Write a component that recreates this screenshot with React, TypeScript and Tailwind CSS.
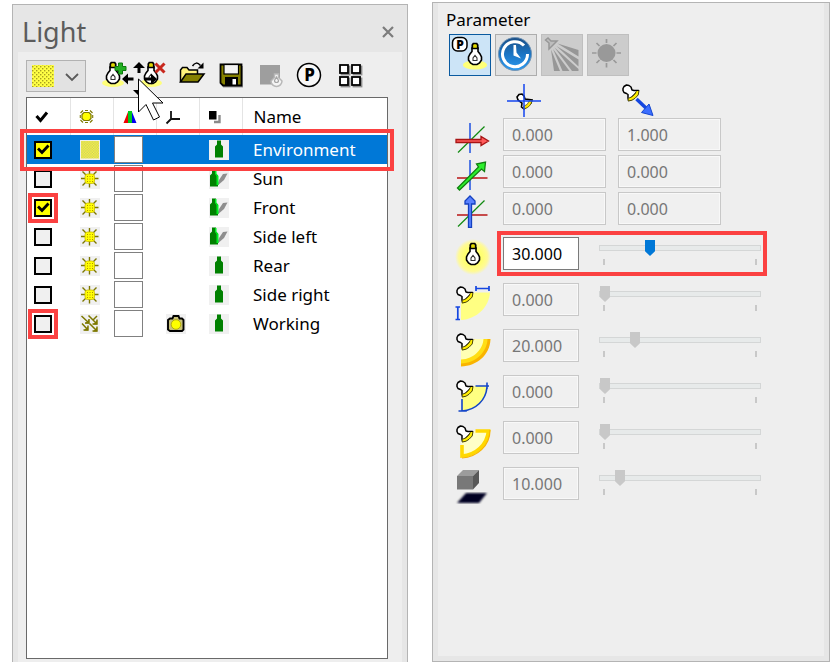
import type { ReactNode } from "react";

const FONT = "font-['Noto_Sans','Open_Sans',sans-serif]";

/* ---------- shared drawings ---------- */

function Bulb({ x, y, tone = "#000" }: { x: number; y: number; tone?: string }) {
  return (
    <g transform={`translate(${x} ${y})`}>
      <path d="M-3 -8 V-4.500 L-5 -2 L-6.500 1 V4 L-4.500 7 L-2 8.500 H2 L4.500 7 L6.500 4 V1 L5 -2 L3 -4.500 V-8 Z" fill="#fff" stroke={tone} strokeWidth="1.600" />
      <path d="M-2.700 -11 L-1.700 -12.500 H1.700 L2.700 -11 V-7.500 H-2.700 Z" fill="#e0d800" stroke={tone} strokeWidth="1.700" />
      <path d="M-2 4.500 V2 L0 -0.500 L2 2 V4.500 M-2.500 4.500 H2.500" fill="none" stroke="#333" strokeWidth="1.100" />
    </g>
  );
}

function Lamp({ x, y }: { x: number; y: number }) {
  return (
    <g transform={`translate(${x} ${y})`}>
      <path d="M1 4.500 L2 2.500 L4.500 1 L7 1.500 L9 3 L10 6 L12 6.500 H16.500 L6.500 16.500 L6 14 V10.500 L4.500 9.500 L2 8.500 L1 6.500 Z" fill="#fff" stroke="#000" strokeWidth="1.500" strokeLinejoin="round" />
      <path d="M17 7 L16 11 L13 14 L10 16 L6.500 17 V14.500 L10 12.800 L13 10 L14.500 7 Z" fill="#ffee00" />
      <path d="M17 6.500 L16.200 11 L13 14.300 L10 16.200 L6.500 17 M14.300 7.500 L12.500 10.500 L9.500 13 L7 14" fill="none" stroke="#4a4400" strokeWidth="1" />
    </g>
  );
}

function DotPattern({ id }: { id: string }) {
  return (
    <pattern id={id} width="4" height="4" patternUnits="userSpaceOnUse">
      <rect width="4" height="4" fill="#ffff45" />
      <rect width="1.400" height="1.400" fill="#a8a020" />
      <rect x="2" y="2" width="1.400" height="1.400" fill="#a8a020" />
    </pattern>
  );
}

/* ---------- toolbar icons ---------- */

function ToolSvg({ children }: { children: ReactNode }) {
  return (
    <svg viewBox="0 0 28 28" className="size-7 overflow-visible" aria-hidden="true">
      {children}
    </svg>
  );
}

const addIcon = (
  <ToolSvg>
    <ellipse cx="13" cy="21" rx="11" ry="4" fill="#ffff7a" />
    <Bulb x={13} y={13} />
    <path d="M18.500 1 h4 v3.500 h3.500 v4 h-3.500 v3.500 h-4 v-3.500 h-3.500 v-4 h3.500 Z" fill="#22b022" stroke="#0c7a0c" strokeWidth="1" />
  </ToolSvg>
);

const removeIcon = (
  <ToolSvg>
    <ellipse cx="12" cy="21" rx="11" ry="4" fill="#ffff7a" />
    <Bulb x={12} y={13} />
    <path d="M16.500 1.500 L25.500 10.500 M25.500 1.500 L16.500 10.500" stroke="#c8281e" strokeWidth="3" />
  </ToolSvg>
);

const openIcon = (
  <ToolSvg>
    <path d="M2.500 20 V8 L4.500 5.500 H9 L11 8 H19.500 V12" fill="#fff27a" stroke="#000" strokeWidth="1.500" />
    <path d="M2.500 20 L8 12 H26 L20 20 Z" fill="#858000" stroke="#000" strokeWidth="1.500" />
    <path d="M14.500 4 Q18 -1.500 22.500 3.500" fill="none" stroke="#000" strokeWidth="1.500" />
    <path d="M25.500 0.500 V6.500 H19.500 Z" />
  </ToolSvg>
);

const saveIcon = (
  <ToolSvg>
    <path d="M5 4 H26 V25.500 H6 Z" fill="#9a9a9a" />
    <path d="M3.500 2.500 H24.500 V23.500 H6 L3.500 21 Z" fill="#858000" stroke="#000" strokeWidth="1.800" />
    <rect x="7" y="2.500" width="14.500" height="9.500" fill="#f4f4f4" stroke="#000" strokeWidth="1.200" />
    <rect x="8" y="15" width="13" height="8.500" />
    <rect x="15.500" y="17" width="3.500" height="5.500" fill="#fff" />
  </ToolSvg>
);

const bitmapIcon = (
  <ToolSvg>
    <rect x="4" y="3" width="20" height="19.500" fill="#9e9e9e" />
    <path d="M18.500 12 h4 v3.500 L26 19 a5 5 0 0 1 -11 0 L18.500 15.500 Z" fill="#f4f4f4" stroke="#b8b8b8" strokeWidth="1.500" />
    <path d="M20.500 15 l2 3.500 a2 2 0 1 1 -4 0 Z" fill="#f4f4f4" stroke="#a6a6a6" strokeWidth="1.200" />
  </ToolSvg>
);

const parameterIcon = (
  <ToolSvg>
    <circle cx="14" cy="13" r="11.500" fill="#f8f8f8" stroke="#000" strokeWidth="1.500" />
    <text x="14.500" y="19" textAnchor="middle" fontSize="17" fontWeight="800" className="font-['Noto_Sans',sans-serif]">P</text>
  </ToolSvg>
);

const tilesIcon = (
  <ToolSvg>
    {[
      [6, 3],
      [18, 3],
      [6, 15],
      [18, 15],
    ].map(([x, y]) => (
      <g key={`${x}-${y}`}>
        <rect x={x + 1.5} y={y + 1.5} width="8" height="8" fill="none" stroke="#8c8c8c" strokeWidth="1.800" />
        <rect x={x} y={y} width="8" height="8" fill="#fff" stroke="#000" strokeWidth="1.800" />
      </g>
    ))}
  </ToolSvg>
);

const tools = [
  { name: "Add light", icon: addIcon },
  { name: "Delete light", icon: removeIcon },
  { name: "Open", icon: openIcon },
  { name: "Save", icon: saveIcon },
  { name: "Save bitmap", icon: bitmapIcon },
  { name: "Parameter", icon: parameterIcon },
  { name: "Arrange", icon: tilesIcon },
];

/* ---------- light list ---------- */

function CellSvg({ children }: { children: ReactNode }) {
  return (
    <svg viewBox="0 0 20 20" className="block size-5 bg-[#f0f0f0]" aria-hidden="true">
      {children}
    </svg>
  );
}

function AreaIcon() {
  return (
    <CellSvg>
      <defs>
        <pattern id="area" width="2.600" height="2.600" patternUnits="userSpaceOnUse">
          <rect width="2.600" height="2.600" fill="#ffff3c" />
          <rect width="1.300" height="1.300" fill="#c8c468" />
          <rect x="1.300" y="1.300" width="1.300" height="1.300" fill="#c8c468" />
        </pattern>
      </defs>
      <rect x="1" y="1" width="18" height="17.500" fill="url(#area)" />
    </CellSvg>
  );
}

function SunIcon() {
  return (
    <CellSvg>
      <path d="M9.500 1 V5 M9.500 14 V18.500 M1 9.500 H5 M14 9.500 H18.500 M2.500 2.500 L6 6 M13 13 L16.500 16.500 M16.500 2.500 L13 6 M6 13 L2.500 16.500" stroke="#7d7800" strokeWidth="1.400" />
      <rect x="5" y="5" width="9.500" height="9.500" rx="2.500" fill="#ffff00" stroke="#c9b800" strokeWidth="0.800" />
      <path d="M7.500 7 V13 M10 7 V13 M12.500 7 V13" stroke="#b09000" strokeWidth="1" strokeDasharray="1 1.500" />
    </CellSvg>
  );
}

function ParallelIcon() {
  return (
    <CellSvg>
      <g fill="none" stroke="#7d7800" strokeWidth="1.500">
        <path d="M1.500 2 L9 9 M5 9 H9 V5" />
        <path d="M8.500 1.500 L17 10 M13 6 L17 2 M12.500 10 H17 V5.500" />
        <path d="M2 9.500 L8 16 M3.500 16 H8 V11.500" />
        <path d="M9.500 9.500 L17 17 M12.500 17 H17 V12.500" />
      </g>
      <path d="M9 9.500 H5 L9 5.500 Z M17 10.500 H13 L17 6.500 Z M8 16.500 H4 L8 12.500 Z M17 17.500 H13 L17 13.500 Z" fill="#7d7800" />
    </CellSvg>
  );
}

function BottleIcon({ shadow }: { shadow: boolean }) {
  return (
    <CellSvg>
      {shadow ? (
        <>
          <path d="M8 17 L10 11 L14 5 L18.500 4.500 L15 11 Z" fill="#8e8e8e" />
          <path d="M3 0.500 H7 V4.500 L9 6.500 V17.500 H1 V6.500 L3 4.500 Z" fill="#008000" />
          <path d="M6 1 H7.500 V5 L9.500 7 V16 H7.500 V7 L6 5 Z" fill="#00f020" />
        </>
      ) : (
        <path d="M8 0.500 H12 V4.500 L14 6.500 V17.500 H6 V6.500 L8 4.500 Z" fill="#008000" />
      )}
    </CellSvg>
  );
}

function CameraIcon() {
  return (
    <CellSvg>
      <path d="M4 4.500 H6.500 L7.500 2 H12.500 L13.500 4.500 H16 L17.500 6 V15.500 L16 17 H4 L2 15.500 V6 Z" fill="#c9c27a" stroke="#000" strokeWidth="1.900" />
      <circle cx="10" cy="10.500" r="4.800" fill="#ffff00" stroke="#a8a000" strokeWidth="0.800" />
    </CellSvg>
  );
}

const kindIcons = { area: AreaIcon, sun: SunIcon, parallel: ParallelIcon };

type Light = {
  name: string;
  on: boolean;
  kind: keyof typeof kindIcons;
  shadow: boolean;
  camera?: boolean;
  marked?: boolean;
  selected?: boolean;
};

const lights: Light[] = [
  { name: "Environment", on: true, kind: "area", shadow: false, selected: true },
  { name: "Sun", on: false, kind: "sun", shadow: true },
  { name: "Front", on: true, kind: "sun", shadow: true, marked: true },
  { name: "Side left", on: false, kind: "sun", shadow: true },
  { name: "Rear", on: false, kind: "sun", shadow: false },
  { name: "Side right", on: false, kind: "sun", shadow: false },
  { name: "Working", on: false, kind: "parallel", shadow: false, camera: true, marked: true },
];

function HeadSvg({ label, children }: { label: string; children: ReactNode }) {
  return (
    <svg viewBox="0 0 16 16" className="block size-4" role="img" aria-label={label}>
      {children}
    </svg>
  );
}

const heads = [
  <HeadSvg label="On">
    <path d="M1.500 7 L5.500 11.500 L12 3.500" fill="none" stroke="#000" strokeWidth="3" />
  </HeadSvg>,
  <HeadSvg label="Type">
    <path d="M5 3.500 H10 L12 5.500 V9.500 L10 11.500 H5 L3 9.500 V5.500 Z" fill="#ffff00" stroke="#7d7800" strokeWidth="1.200" />
    <path d="M1.500 4 L4 1.500 M11 1.500 L13.500 4 M1.500 11 L4 13.500 M11 13.500 L13.500 11 M6 1.500 H9 M6 13.500 H9 M1.300 6 V9 M13.700 6 V9" stroke="#7d7800" strokeWidth="1.100" />
  </HeadSvg>,
  <HeadSvg label="Color">
    <path d="M6 3 V14 H1.500 Z" fill="#f00000" />
    <path d="M6 2 H10 V14 H6 Z" fill="#00c81e" />
    <path d="M10 3 L14.500 14 H10 Z" fill="#0000f0" />
  </HeadSvg>,
  <HeadSvg label="Reference">
    <path d="M6 2 V10 H15 M6 10 L1.500 14.500" fill="none" stroke="#111" strokeWidth="1.800" />
  </HeadSvg>,
  <HeadSvg label="Shadow">
    <rect x="1" y="2" width="7.500" height="8.500" />
    <path d="M11.500 6 V13 H6" fill="none" stroke="#8a8a8a" strokeWidth="2.400" />
  </HeadSvg>,
];

function LightRow({ light, index }: { light: Light; index: number }) {
  const Kind = kindIcons[light.kind];
  const nameId = `light-${index}`;
  return (
    <tr className={light.selected ? "h-[29px] bg-[#0078d7] text-white" : "h-[29px]"}>
      <td className="p-0 pl-[7px]">
        <span className="relative grid size-[18px] place-items-center bg-[#f0f0f0]">
          <input
            type="checkbox"
            defaultChecked={light.on}
            aria-labelledby={nameId}
            className="peer col-start-1 row-start-1 size-[18px] appearance-none border-2 border-black checked:bg-[#ffff00]"
          />
          <svg viewBox="0 0 18 18" className="pointer-events-none invisible col-start-1 row-start-1 size-[18px] peer-checked:visible" aria-hidden="true">
            <path d="M4 7.500 L8 11.500 L14.500 4.500" fill="none" stroke="#000" strokeWidth="2.800" />
          </svg>
          {light.marked && <span className="pointer-events-none absolute -inset-[6px] border-4 border-[#fb4141]" />}
        </span>
      </td>
      <td className="p-0 pl-2.5">
        <Kind />
      </td>
      <td className="p-0 pl-px">
        <span className="block h-[27px] w-[29px] border border-[#808080] bg-white" />
      </td>
      <td className="p-0 pl-2.5">{light.camera && <CameraIcon />}</td>
      <td className="p-0 pl-2.5">
        <BottleIcon shadow={light.shadow} />
      </td>
      <td id={nameId} className="p-0 pl-[11px] text-[17px] leading-7">
        {light.name}
      </td>
    </tr>
  );
}

function LightPanel() {
  return (
    <section className="relative mt-1 mb-1 flex grow basis-[396px] flex-col border border-b-0 border-[#b4b4b4] bg-[#e6e6e6] px-[5px]">
      <header className="flex h-[47px] items-center justify-between pt-1.5 pr-1 pl-1">
        <h1 className="text-[27px] leading-9 text-[#5c5c5c]">Light</h1>
        <button type="button" aria-label="Close" className="grid size-5 place-items-center">
          <svg viewBox="0 0 12 12" className="size-3" aria-hidden="true">
            <path d="M1 1 L11 11 M11 1 L1 11" stroke="#7c7c7c" strokeWidth="2.200" />
          </svg>
        </button>
      </header>
      <div className="flex grow flex-col bg-[#eee] px-2 pt-2 pb-[3px] pr-[14px]">
        <div className="flex h-8 items-center gap-[11px]">
          <div className="mr-[3px] grid h-8 w-[60px] items-center">
            <select aria-label="Light type" className="col-start-1 row-start-1 h-8 w-full appearance-none border border-[#b2b2b2] bg-[#e2e2e2]">
              <option value="environment" aria-label="Environment" />
            </select>
            <svg viewBox="0 0 60 32" className="pointer-events-none col-start-1 row-start-1 h-8 w-[60px]" aria-hidden="true">
              <defs>
                <DotPattern id="dots" />
              </defs>
              <rect x="6" y="5" width="22" height="22" fill="url(#dots)" />
              <path d="M40 14 L46 20 L52 14" fill="none" stroke="#5a5a5a" strokeWidth="1.800" />
            </svg>
          </div>
          {tools.map((tool) => (
            <button key={tool.name} type="button" aria-label={tool.name} className="size-7 shrink-0">
              {tool.icon}
            </button>
          ))}
        </div>
        <div className="relative mt-[5px] grow border border-[#696969] bg-white">
          <table className="w-full table-fixed border-collapse text-black">
            <colgroup>
              <col className="w-[43px]" />
              <col className="w-[43px]" />
              <col className="w-[43px]" />
              <col className="w-[43px]" />
              <col className="w-[43px]" />
              <col />
            </colgroup>
            <thead>
              <tr className="h-[37px]">
                {heads.map((head, i) => (
                  <th key={i} scope="col" className="border-r border-[#e4e4e4] p-0 pl-2">
                    {head}
                  </th>
                ))}
                <th scope="col" className="p-0 pl-[11px] text-left text-[17px] leading-7 font-normal">
                  Name
                </th>
              </tr>
            </thead>
            <tbody>
              {lights.map((light, i) => (
                <LightRow key={light.name} light={light} index={i} />
              ))}
            </tbody>
          </table>
          <div className="pointer-events-none absolute -inset-x-[7px] top-[31px] h-[42px] border-4 border-[#fb4141]" />
        </div>
      </div>
      <svg viewBox="0 0 46 62" className="pointer-events-none absolute top-[55px] left-[107px] h-[62px] w-[46px]" aria-hidden="true">
        <path d="M19 2 L25 8 H20.500 V13 H17.500 V8 H13 Z M19 36 L25 30 H13 Z M2 19 L8 13.500 V17.500 H13.500 V20.500 H8 V24.500 Z M37 19 L31 13.500 V17.500 H24.500 V20.500 H31 V24.500 Z" />
        <path d="M18.500 19 V52 L26 44.500 L33.500 60 L39.500 57 L32.500 43 H43 Z" fill="#fff" stroke="#000" strokeWidth="1" />
      </svg>
    </section>
  );
}

/* ---------- parameter panel ---------- */

function ModeSvg({ children }: { children: ReactNode }) {
  return (
    <svg viewBox="0 0 40 40" className="size-10" aria-hidden="true">
      {children}
    </svg>
  );
}

const modes = [
  {
    name: "Light parameters",
    look: "border-[#0a5aa0] bg-[#cce4f7]",
    disabled: false,
    icon: (
      <ModeSvg>
        <ellipse cx="25" cy="30" rx="12" ry="4.500" fill="#ffff78" />
        <Bulb x={25} y={21} />
        <rect x="2.500" y="2.500" width="14.500" height="13.500" rx="5" fill="#fff" stroke="#000" strokeWidth="1.500" />
        <text x="10" y="13.500" textAnchor="middle" fontSize="12" fontWeight="900" className="font-['Noto_Sans',sans-serif]">P</text>
      </ModeSvg>
    ),
  },
  {
    name: "Sun time",
    look: "border-[#adadad] bg-[#e1e1e1]",
    disabled: false,
    icon: (
      <ModeSvg>
        <defs>
          <linearGradient id="clock" x1="0" y1="0" x2="0" y2="1">
            <stop offset="0" stopColor="#1c4f86" />
            <stop offset="0.500" stopColor="#1a74c4" />
            <stop offset="1" stopColor="#2c9af0" />
          </linearGradient>
        </defs>
        <circle cx="19" cy="19" r="16.500" fill="url(#clock)" stroke="#7395b5" strokeWidth="1" />
        <path d="M28 10.500 A12.500 12.500 0 1 0 31.500 19" fill="none" stroke="#fff" strokeWidth="3" />
        <path d="M17.500 10 H20 L20.500 17.500 L25 23.500 L17.500 20.500 Z" fill="#fff" />
      </ModeSvg>
    ),
  },
  {
    name: "Light rays",
    look: "border-[#bfbfbf] bg-[#ccc]",
    disabled: true,
    icon: (
      <ModeSvg>
        <path d="M3.500 5 L6 3 L9 6 H15 L7 14 V8 Z" fill="#bdbdbd" stroke="#979797" strokeWidth="1.500" />
        <path d="M15.500 8.500 L36.500 15 V21.500 Z M14.500 11 L36.500 24.500 V31.500 Z M12.500 12.500 L36.500 34 V36 H30 Z M11 14 L27.500 36 H20.500 Z M9 14.500 L18 36 H12 Z" fill="#979797" />
      </ModeSvg>
    ),
  },
  {
    name: "Sun",
    look: "border-[#bfbfbf] bg-[#ccc]",
    disabled: true,
    icon: (
      <ModeSvg>
        <circle cx="18.500" cy="18" r="9" fill="#999" />
        <path d="M18.500 4 V8 M18.500 28 V32.500 M4 18 H8.500 M28.500 18 H33 M8.500 8 L11.500 11 M25.500 25 L28.500 28 M28.500 8 L25.500 11 M11.500 25 L8.500 28" stroke="#999" strokeWidth="1.700" />
      </ModeSvg>
    ),
  },
];

function AxisSvg({ children }: { children: ReactNode }) {
  return (
    <svg viewBox="0 0 36 36" className="block size-9" aria-hidden="true">
      {children}
    </svg>
  );
}

const blueAxis = <path d="M15 5 V35" stroke="#1e50e0" strokeWidth="1.500" />;
const greenAxis = <path d="M3 34.500 L29.500 8.500" stroke="#108a10" strokeWidth="1.200" />;
const redAxis = <path d="M2 23 H32.500" stroke="#b81414" strokeWidth="1.500" />;

const axes = [
  {
    name: "X",
    values: ["0.000", "1.000"],
    icon: (
      <AxisSvg>
        {blueAxis}
        {greenAxis}
        <path d="M1 21.500 H26 V18.500 L33.500 23 L26 27.500 V24.500 H1 Z" fill="#ff5a5a" stroke="#a81414" strokeWidth="1.300" />
      </AxisSvg>
    ),
  },
  {
    name: "Y",
    values: ["0.000", "0.000"],
    icon: (
      <AxisSvg>
        {blueAxis}
        {redAxis}
        <path d="M2.500 33 L23.500 12 L21.500 9 L30.500 7 L29.500 16.500 L26.500 14 L4.500 35 Z" fill="#2cf02c" stroke="#0f7f0f" strokeWidth="1.300" />
      </AxisSvg>
    ),
  },
  {
    name: "Z",
    values: ["0.000", "0.000"],
    icon: (
      <AxisSvg>
        {redAxis}
        {greenAxis}
        <path d="M13.500 35.500 V12 H10 V9 L15 4 L20 9 V12 H16.500 V35.500 Z" fill="#5a82ff" stroke="#1440c0" strokeWidth="1.300" />
      </AxisSvg>
    ),
  },
];

function ParamSvg({ children }: { children: ReactNode }) {
  return (
    <svg viewBox="0 0 36 40" className="block h-10 w-9 shrink-0" aria-hidden="true">
      {children}
    </svg>
  );
}

const sliders = [
  {
    name: "Intensity",
    value: "30.000",
    enabled: true,
    icon: (
      <ParamSvg>
        <defs>
          <radialGradient id="glow">
            <stop offset="0.500" stopColor="#ffff70" />
            <stop offset="0.800" stopColor="#fffa96" />
            <stop offset="1" stopColor="#fffa96" stopOpacity="0" />
          </radialGradient>
        </defs>
        <circle cx="18" cy="20" r="18" fill="url(#glow)" />
        <Bulb x={18} y={19} />
      </ParamSvg>
    ),
  },
  {
    name: "Size",
    value: "0.000",
    enabled: false,
    icon: (
      <ParamSvg>
        <path d="M20 9.500 H35 C34 24 22 36 6 37 V20 Z" fill="#ffff82" />
        <Lamp x={1} y={3} />
        <path d="M21 5.500 H34 M21 3 V8 M34 3 V8 M2.800 24 V36.500 M0.500 24 H5 M0.500 36.500 H5" stroke="#1446e0" strokeWidth="1.700" />
      </ParamSvg>
    ),
  },
  {
    name: "Soft cone",
    value: "20.000",
    enabled: false,
    icon: (
      <ParamSvg>
        <path d="M20 10 H35.500 C35 26 22 37 6 37.500 V20 Z" fill="#f9b400" />
        <path d="M20 10 H32.500 C32 23 21 34 6 34.500 V20 Z" fill="#ffde14" />
        <path d="M20 10 H28.500 C28 20 19 30 6 30.500 V20 Z" fill="#ffffb4" />
        <Lamp x={1} y={4} />
      </ParamSvg>
    ),
  },
  {
    name: "Range",
    value: "0.000",
    enabled: false,
    icon: (
      <ParamSvg>
        <path d="M20 11 H32.500 C32 24 22 34.500 7 36 V20 Z" fill="#ffff82" />
        <Lamp x={1} y={5} />
        <path d="M20.500 11 H34 M32 7.500 V14 M32 12 C31 25 21 35 7 36 M7 24 V36 M3.500 36 H12" fill="none" stroke="#1446c8" strokeWidth="1.600" />
      </ParamSvg>
    ),
  },
  {
    name: "Fade",
    value: "0.000",
    enabled: false,
    icon: (
      <ParamSvg>
        <path d="M20 9.500 H33.500 C32 24 21 34 6.500 35 V20 Z" fill="#ffffc8" />
        <path d="M20.500 10 H33.500 C32 24 21 34 7 35 V24" fill="none" stroke="#ffd800" strokeWidth="3.600" />
        <path d="M35 9 C35 25 22 36 7 37" fill="none" stroke="#f9b400" strokeWidth="1.200" />
        <Lamp x={1} y={4} />
      </ParamSvg>
    ),
  },
  {
    name: "Shadow",
    value: "10.000",
    enabled: false,
    icon: (
      <ParamSvg>
        <defs>
          <filter id="soft">
            <feGaussianBlur stdDeviation="0.900" />
          </filter>
        </defs>
        <path d="M2 36 L11 26 H32 L24 36 Z" fill="#000024" filter="url(#soft)" />
        <path d="M2 9 L8 3 H24 L18 9 Z" fill="#9c9c9c" />
        <rect x="2" y="9" width="16" height="13.500" fill="#787878" />
        <path d="M18 9 L24 3 V16 L18 22.500 Z" fill="#585858" />
      </ParamSvg>
    ),
  },
];

const disabledBox = "border border-[#c8c8c8] bg-[#f0f0f0] text-[#777] inset-ring inset-ring-[#f8f8f8]";
const enabledBox = "border border-[#7a7a7a] bg-white text-black";

function ParameterPanel() {
  return (
    <section className="mt-0.5 mb-1 grow basis-[398px] border border-[#b4b4b4] bg-[#e6e6e6] px-[5px] pb-[5px]">
      <div className="h-full bg-[#eee] px-2 pt-[5px]">
        <h2 className="text-[17px] leading-6 text-black">Parameter</h2>
        <div className="mt-0.5 ml-[3px] flex gap-1">
          {modes.map((mode) => (
            <button key={mode.name} type="button" aria-label={mode.name} disabled={mode.disabled} className={`size-[42px] shrink-0 border ${mode.look}`}>
              {mode.icon}
            </button>
          ))}
        </div>

        <div className="mt-[7px] ml-[9px] grid grid-cols-[36px_103px_103px] gap-x-3 gap-y-px">
          <div className="col-start-2 pl-[3px]">
            <svg viewBox="0 0 36 34" className="block h-[34px] w-9" role="img" aria-label="Position">
              <path d="M11 14 L13 11.500 L16 11 L18 13 L19 16 L26 17 L25 20 L18 26 L15.500 24 L16 20 L12 17 Z" fill="#fff" stroke="#000" strokeWidth="1.600" />
              <path d="M26 17.500 Q25 24 18 26 L17.500 23.500 Q22 22 23.500 17.500 Z" fill="#ffe600" stroke="#5a5200" strokeWidth="0.800" />
              <path d="M1 18 H35 M18 1 V34" stroke="#1446f0" strokeWidth="1.500" />
            </svg>
          </div>
          <div className="pl-[3px]">
            <svg viewBox="0 0 36 34" className="block h-[34px] w-9" role="img" aria-label="Direction">
              <Lamp x={1} y={1} />
              <path d="M15.500 16 L26 26" stroke="#1446e0" strokeWidth="3.500" />
              <path d="M28 21 L32 32.500 L20.500 29.500 Z" fill="#3c6eff" stroke="#1446d0" strokeWidth="1" />
            </svg>
          </div>
          {axes.map((axis) => (
            <div key={axis.name} className="col-span-3 grid grid-cols-subgrid">
              {axis.icon}
              {axis.values.map((value, i) => (
                <input
                  key={i}
                  type="text"
                  disabled
                  defaultValue={value}
                  aria-label={`${i === 0 ? "Position" : "Direction"} ${axis.name}`}
                  className={`h-[33px] w-full px-2 text-[16px] ${disabledBox}`}
                />
              ))}
            </div>
          ))}
        </div>

        <div className="mt-[9px] ml-[9px]">
          {sliders.map((row) => (
            <div key={row.name} className="relative flex h-[46px] items-start">
              {row.icon}
              <input
                type="text"
                defaultValue={row.value}
                disabled={!row.enabled}
                aria-label={row.name}
                className={`ml-3 h-[33px] w-[76px] px-2 text-[16px] ${row.enabled ? enabledBox : disabledBox}`}
              />
              <div className="ml-5 w-[162px] pt-[3px]">
                <input
                  type="range"
                  min={0}
                  max={100}
                  defaultValue={Number(row.value)}
                  disabled={!row.enabled}
                  aria-label={`${row.name} slider`}
                  className="block h-4 w-full appearance-none bg-transparent [&::-webkit-slider-runnable-track]:h-1.5 [&::-webkit-slider-runnable-track]:border [&::-webkit-slider-runnable-track]:border-[#d4d6d6] [&::-webkit-slider-runnable-track]:bg-[#e7eaea] [&::-webkit-slider-thumb]:-mt-1.5 [&::-webkit-slider-thumb]:h-4 [&::-webkit-slider-thumb]:w-2.5 [&::-webkit-slider-thumb]:appearance-none [&::-webkit-slider-thumb]:bg-[#0078d7] [&::-webkit-slider-thumb]:[clip-path:polygon(0_0,100%_0,100%_70%,50%_100%,0_70%)] disabled:[&::-webkit-slider-thumb]:bg-[#c8c8c8]"
                />
                <div className="mt-[3px] flex justify-between px-1">
                  <span className="h-1.5 w-0.5 bg-[#c8c8c8]" />
                  <span className="h-1.5 w-0.5 bg-[#c8c8c8]" />
                </div>
              </div>
              {row.enabled && <span className="pointer-events-none absolute -top-[6px] left-[42px] h-[45px] w-[270px] border-4 border-[#fb4141]" />}
            </div>
          ))}
        </div>
      </div>
    </section>
  );
}

export default function App() {
  return (
    <main className={`flex min-h-screen gap-6 bg-white pr-1.5 pl-3 ${FONT}`}>
      <LightPanel />
      <ParameterPanel />
    </main>
  );
}
